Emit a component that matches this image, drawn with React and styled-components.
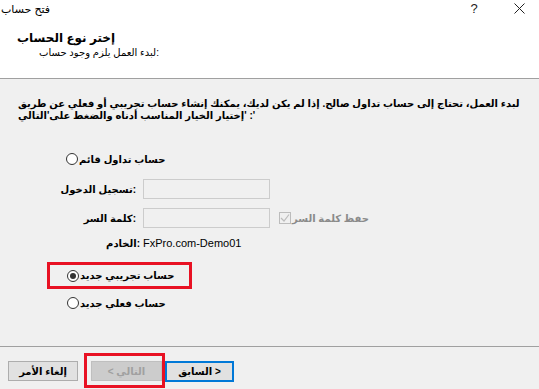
import React from 'react';
import styled, { createGlobalStyle } from 'styled-components';

const GlobalStyle = createGlobalStyle`
  html, body {
    margin: 0;
    padding: 0;
    background: #f0f0f0;
  }
  body {
    font-family: "Liberation Sans", "DejaVu Sans", sans-serif;
  }
`;

const Window = styled.div`
  width: 539px;
  height: 389px;
  display: flex;
  flex-direction: column;
  overflow: hidden;
  color: #000;
  font-size: 10px;
`;

const TitleBar = styled.div`
  height: 24px;
  background: #fff;
  display: flex;
  align-items: center;
  padding-left: 1px;
`;

const Caption = styled.div`
  flex: 1;
  font-size: 11px;
  padding-bottom: 6px;
`;

const CaptionBtn = styled.div`
  width: ${p => p.w}px;
  margin-right: ${p => p.mr || 0}px;
  height: 24px;
  display: flex;
  align-items: center;
  justify-content: center;
  font-size: 13px;
  color: #222;
  padding-bottom: 8px;
  box-sizing: border-box;
`;

const Header = styled.div`
  height: 55px;
  background: #fff;
  border-bottom: 1px solid #a0a0a0;
  padding-top: 7px;
  box-sizing: border-box;
`;

const HeadTitle = styled.div`
  margin-left: 17px;
  font-weight: bold;
  font-size: 12px;
  line-height: 14px;
`;

const HeadSub = styled.div`
  margin-left: 39px;
  margin-top: 2px;
  line-height: 12px;
`;

const Body = styled.div`
  flex: 1;
  display: flex;
  flex-direction: column;
`;

const Intro = styled.p`
  margin: 19px 0 0 18px;
  font-weight: bold;
  line-height: 12px;
`;

const Options = styled.div`
  display: flex;
  flex-direction: column;
  padding-left: 47px;
`;

const RadioRow = styled.label`
  display: flex;
  align-items: center;
  gap: 1px;
  height: ${p => p.h || 14}px;
  margin-left: ${p => p.ml ?? 19}px;
  margin-top: ${p => p.mt || 0}px;
  font-weight: bold;
  white-space: nowrap;
`;

const RadioDot = styled.span`
  width: 12px;
  height: 12px;
  border-radius: 50%;
  border: 1px solid #333;
  background: #fff;
  box-sizing: border-box;
  display: flex;
  align-items: center;
  justify-content: center;
  flex-shrink: 0;
  &::after {
    content: '';
    width: 6px;
    height: 6px;
    border-radius: 50%;
    background: ${p => (p.checked ? '#333' : 'transparent')};
  }
`;

const Highlight = styled.div`
  border: 3px solid #e81123;
  width: 139px;
  margin-top: ${p => p.mt || 0}px;
`;

const CredGrid = styled.div`
  display: grid;
  grid-template-columns: 89px 127px auto;
  column-gap: 7px;
  row-gap: 9px;
  align-items: center;
  margin-top: 13px;
`;

const FieldLabel = styled.div`
  text-align: right;
  font-weight: bold;
  white-space: nowrap;
`;

const TextBox = styled.div`
  height: 20px;
  border: 1px solid #cccccc;
  background: #f0f0f0;
  box-sizing: border-box;
`;

const Remember = styled.div`
  display: flex;
  align-items: center;
  gap: 1px;
  margin-left: 2px;
  color: #8a8a8a;
  font-weight: bold;
  white-space: nowrap;
`;

const CheckBox = styled.span`
  width: 12px;
  height: 12px;
  border: 1px solid #bcbcbc;
  box-sizing: border-box;
  display: flex;
  align-items: center;
  justify-content: center;
`;

const ServerRow = styled.div`
  grid-column: 1 / span 3;
  display: grid;
  grid-template-columns: 93px auto;
  column-gap: 3px;
  height: 12px;
  align-items: center;
`;

const ServerName = styled.span`
  font-size: 11px;
`;

const Footer = styled.div`
  height: 43px;
  border-top: 1px solid #a0a0a0;
  box-sizing: border-box;
  display: flex;
  align-items: flex-start;
  padding: 6px 0 0 8px;
`;

const Button = styled.div`
  width: ${p => p.w || 70}px;
  height: ${p => p.h || 20}px;
  margin-top: ${p => p.mt || 0}px;
  box-sizing: border-box;
  border: ${p => (p.focused ? '2px solid #0078d7' : p.disabled ? '1px solid #bfbfbf' : '1px solid #adadad')};
  background: ${p => (p.disabled ? '#cccccc' : '#e1e1e1')};
  color: ${p => (p.disabled ? '#a0a0a0' : '#000')};
  font-weight: bold;
  direction: rtl;
  display: flex;
  align-items: center;
  justify-content: center;
  white-space: nowrap;
`;

const NextFrame = styled.div`
  border: 3px solid #e81123;
  padding: 5px 0 0 4px;
  margin-left: 6px;
  width: 81px;
  height: 35px;
  box-sizing: border-box;
`;

const Radio = ({ checked, children, ...rest }) => (
  <RadioRow {...rest}>
    <RadioDot checked={checked} />
    <span>{children}</span>
  </RadioRow>
);

export default function App() {
  return (
    <>
      <GlobalStyle />
      <Window>
        <TitleBar>
          <Caption>فتح حساب</Caption>
          <CaptionBtn w={40} mr={5}>?</CaptionBtn>
          <CaptionBtn w={40}>
            <svg width="11" height="11" viewBox="0 0 11 11">
              <path d="M0.5 0.5 L10.5 10.5 M10.5 0.5 L0.5 10.5" stroke="#222" strokeWidth="1" />
            </svg>
          </CaptionBtn>
        </TitleBar>
        <Header>
          <HeadTitle>إختر نوع الحساب</HeadTitle>
          <HeadSub>لبدء العمل يلزم وجود حساب:</HeadSub>
        </Header>
        <Body>
          <Intro>
            لبدء العمل، تحتاج إلى حساب تداول صالح. إذا لم يكن لديك، يمكنك إنشاء حساب تجريبي أو فعلي عن طريق
            <br />
            إختيار الخيار المناسب أدناه والضغط على'التالي' :'
          </Intro>
          <Options>
            <Radio mt={30}>حساب تداول قائم</Radio>
            <CredGrid>
              <FieldLabel>تسجيل الدخول:</FieldLabel>
              <TextBox />
              <span />
              <FieldLabel>كلمة السر:</FieldLabel>
              <TextBox />
              <Remember>
                <CheckBox>
                  <svg width="10" height="10" viewBox="0 0 10 10">
                    <path d="M1 5 L4 8 L9 1.5" fill="none" stroke="#bcbcbc" strokeWidth="1.2" />
                  </svg>
                </CheckBox>
                <span>حفظ كلمة السر</span>
              </Remember>
              <ServerRow>
                <FieldLabel>الخادم:</FieldLabel>
                <ServerName>FxPro.com-Demo01</ServerName>
              </ServerRow>
            </CredGrid>
            <Highlight mt={13}>
              <Radio checked h={21} ml={17}>حساب تجريبي جديد</Radio>
            </Highlight>
            <Radio mt={7} ml={20}>حساب فعلي جديد</Radio>
          </Options>
        </Body>
        <Footer>
          <Button mt={8}>إلغاء الأمر</Button>
          <NextFrame>
            <Button disabled w={71}>التالي &gt;</Button>
          </NextFrame>
          <Button focused mt={8} w={69} h={21}>&lt; السابق</Button>
        </Footer>
      </Window>
    </>
  );
}
